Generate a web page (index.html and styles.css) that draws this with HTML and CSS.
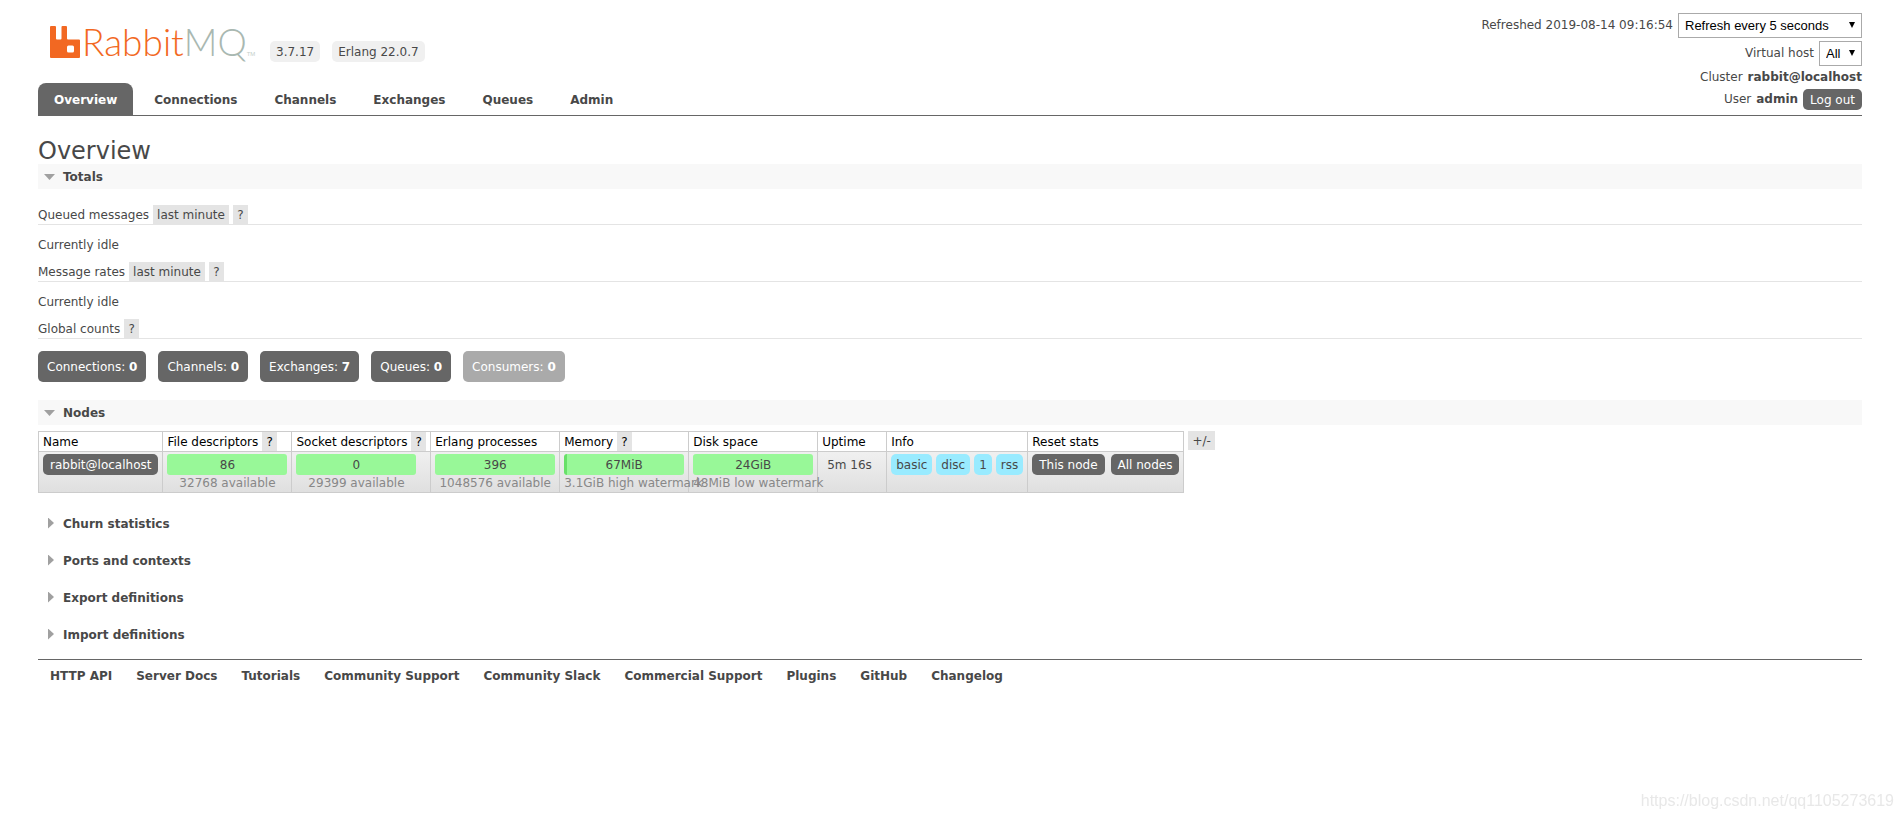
FILE: index.html
```html
<!DOCTYPE html>
<html lang="en">
<head>
<meta charset="utf-8">
<title>RabbitMQ Management</title>
<link rel="stylesheet" href="styles.css">
</head>
<body>
<header class="page-header">
  <div class="brand">
    <a class="logo" href="#">
      <svg class="logo-mark" viewBox="0 0 30 32" aria-hidden="true"><path fill="#f26822" fill-rule="evenodd" d="M1 0h4q1 0 1 1v11.500q0 1 1 1h3.500q1 0 1-1v-11.500q0-1 1-1h3.500q1 0 1 1v11.500q0 1 1 1h11q1 0 1 1v16.500q0 1-1 1h-28q-1 0-1-1v-30q0-1 1-1zM18.500 19.500q-1.500 0-1.500 1.500v4q0 1.500 1.500 1.500h4q1.500 0 1.500-1.500v-4q0-1.500-1.500-1.500z"/></svg>
      <span class="logo-name">Rabbit<span class="logo-mq">MQ</span></span>
      <span class="logo-tm">TM</span>
    </a>
    <ul class="versions">
      <li>3.7.17</li>
      <li>Erlang 22.0.7</li>
    </ul>
  </div>
  <div class="session">
    <div class="selects">
      <div class="session-row">
        <label for="refresh">Refreshed 2019-08-14 09:16:54</label>
        <span class="select refresh-select"><select id="refresh"><option>Refresh every 5 seconds</option></select><svg class="arrow" viewBox="0 0 6 6" aria-hidden="true"><path d="M0 0h6L3 6z"/></svg></span>
      </div>
      <div class="session-row">
        <label for="vhost">Virtual host</label>
        <span class="select"><select id="vhost"><option>All</option></select><svg class="arrow" viewBox="0 0 6 6" aria-hidden="true"><path d="M0 0h6L3 6z"/></svg></span>
      </div>
    </div>
    <div class="session-row info-row">Cluster <b>rabbit@localhost</b></div>
    <div class="session-row info-row">User <b>admin</b> <button class="pill" type="button">Log out</button></div>
  </div>
</header>
<nav class="tabs">
  <a class="tab selected" href="#">Overview</a>
  <a class="tab" href="#">Connections</a>
  <a class="tab" href="#">Channels</a>
  <a class="tab" href="#">Exchanges</a>
  <a class="tab" href="#">Queues</a>
  <a class="tab" href="#">Admin</a>
</nav>
<main>
  <h1>Overview</h1>
  <section>
    <h2 class="section-title open"><button type="button"><span class="marker"></span>Totals</button></h2>
    <div class="totals">
      <h3>Queued messages <button class="chip" type="button">last minute</button> <button class="chip help" type="button">?</button></h3>
      <p>Currently idle</p>
      <h3>Message rates <button class="chip" type="button">last minute</button> <button class="chip help" type="button">?</button></h3>
      <p>Currently idle</p>
      <h3>Global counts <button class="chip help" type="button">?</button></h3>
      <div class="counts">
        <a href="#">Connections: <b>0</b></a>
        <a href="#">Channels: <b>0</b></a>
        <a href="#">Exchanges: <b>7</b></a>
        <a href="#">Queues: <b>0</b></a>
        <span class="disabled">Consumers: <b>0</b></span>
      </div>
    </div>
  </section>
  <section>
    <h2 class="section-title open"><button type="button"><span class="marker"></span>Nodes</button></h2>
    <div class="nodes">
      <table>
        <thead>
          <tr>
            <th>Name</th>
            <th>File descriptors <button class="chip help" type="button">?</button></th>
            <th>Socket descriptors <button class="chip help" type="button">?</button></th>
            <th>Erlang processes</th>
            <th>Memory <button class="chip help" type="button">?</button></th>
            <th>Disk space</th>
            <th class="uptime">Uptime</th>
            <th>Info</th>
            <th>Reset stats</th>
          </tr>
        </thead>
        <tbody>
          <tr>
            <td><a class="pill" href="#">rabbit@localhost</a></td>
            <td><div class="status"><div class="bar">86</div><small>32768 available</small></div></td>
            <td><div class="status"><div class="bar">0</div><small>29399 available</small></div></td>
            <td><div class="status"><div class="bar">396</div><small>1048576 available</small></div></td>
            <td><div class="status"><div class="bar used">67MiB</div><small>3.1GiB high watermark</small></div></td>
            <td><div class="status"><div class="bar">24GiB</div><small>48MiB low watermark</small></div></td>
            <td class="uptime"><div class="text">5m 16s</div></td>
            <td><div class="group tags"><span>basic</span><span>disc</span><span>1</span><span>rss</span></div></td>
            <td><div class="group resets"><button class="pill" type="button">This node</button><button class="pill" type="button">All nodes</button></div></td>
          </tr>
        </tbody>
      </table>
      <button class="chip columns" type="button">+/-</button>
    </div>
  </section>
  <div class="closed-sections">
    <h2 class="section-title"><button type="button"><span class="marker"></span>Churn statistics</button></h2>
    <h2 class="section-title"><button type="button"><span class="marker"></span>Ports and contexts</button></h2>
    <h2 class="section-title"><button type="button"><span class="marker"></span>Export definitions</button></h2>
    <h2 class="section-title"><button type="button"><span class="marker"></span>Import definitions</button></h2>
  </div>
</main>
<footer>
  <a href="#">HTTP API</a>
  <a href="#">Server Docs</a>
  <a href="#">Tutorials</a>
  <a href="#">Community Support</a>
  <a href="#">Community Slack</a>
  <a href="#">Commercial Support</a>
  <a href="#">Plugins</a>
  <a href="#">GitHub</a>
  <a href="#">Changelog</a>
</footer>
<div class="watermark">https://blog.csdn.net/qq1105273619</div>
</body>
</html>
```

FILE: styles.css
```css
* { box-sizing: border-box; }

body {
  margin: 0;
  padding: 13px 41px 0 38px;
  background: #fff;
  color: #484848;
  font: 12px/17px Verdana, "DejaVu Sans", sans-serif;
}

a { color: inherit; text-decoration: none; }
button { font: inherit; color: inherit; border: 0; margin: 0; padding: 0; background: none; cursor: pointer; }
h1, h2, h3, p, ul { margin: 0; padding: 0; font-weight: normal; }

/* Header */
.page-header { display: flex; justify-content: space-between; align-items: flex-start; height: 70px; }
.brand { display: flex; gap: 17px; padding: 5px 0 0 12px; }
.logo { display: flex; align-items: flex-end; width: 203px; height: 40px; white-space: nowrap; }
.logo-mark { flex: none; width: 30px; height: 32px; margin-right: 2px; }
.logo-name { color: #f26822; font: 300 37px/32px Lato, "Liberation Sans", sans-serif; }
.logo-mq { color: #a9b8b1; }
.logo-tm { color: #c5cfca; font: 6px/8px "Liberation Sans", sans-serif; }
.versions { display: flex; gap: 12px; list-style: none; padding-top: 23px; }
.versions li { height: 21px; padding: 3px 6px 1px; border-radius: 5px; background: #f0f0f0; }

.session, .selects { display: flex; flex-direction: column; align-items: flex-end; }
.selects { gap: 3px; }
.session-row { display: flex; align-items: center; gap: 5px; }
.info-row { height: 22px; }
.select { position: relative; display: flex; }
.select select {
  appearance: none;
  height: 25px;
  padding: 0 20px 0 6px;
  border: 1px solid #aaa;
  border-radius: 0;
  background: #fff;
  color: #000;
  font: 13px "Liberation Sans", Arial, sans-serif;
}
.refresh-select select { width: 184px; }
.arrow { position: absolute; right: 7px; top: 9px; width: 6px; height: 6px; pointer-events: none; }
.pill { display: block; height: 21px; padding: 3px 7px 1px; border-radius: 5px; background: #666; color: #fff; }

/* Tabs */
.tabs { display: flex; gap: 5px; border-bottom: 1px solid #666; font-weight: bold; }
.tab { padding: 9px 16px 6px; border-radius: 8px 8px 0 0; }
.tab.selected { background: #666; color: #fff; }

h1 { padding-top: 22px; font-size: 24px; line-height: 26px; }

/* Collapsible sections */
.section-title { font-size: 12px; font-weight: bold; }
.section-title button { display: flex; align-items: center; width: 100%; height: 25px; padding-top: 1px; text-align: left; }
.section-title.open { background: #f8f8f8; }
.marker { width: 25px; height: 13px; flex: none; }
.marker::before { content: ""; display: block; width: 6px; height: 11px; margin-left: 10px; background: #a0a0a0; clip-path: polygon(0 0, 100% 50%, 0 100%); }
.open .marker { height: 6px; }
.open .marker::before { width: 11px; height: 6px; margin-left: 6px; clip-path: polygon(0 0, 100% 0, 50% 100%); }

.totals { padding: 16px 0 18px; }
.totals h3 { display: flex; align-items: flex-end; gap: 4px; height: 20px; border-bottom: 1px solid #e4e4e4; font-size: 12px; }
.totals p { padding: 12px 0 8px; }
.chip { height: 19px; padding: 2px 4px 0; background: #e4e4e4; }
.help { width: 15px; }

.counts { display: flex; gap: 12px; padding-top: 12px; }
.counts > * { padding: 8px 9px 6px; border-radius: 5px; background: #666; color: #fff; }
.counts .disabled { background: #aaa; }

/* Nodes table */
.nodes { display: flex; gap: 4px; padding-top: 6px; align-items: flex-start; }
table { border-collapse: collapse; }
th, td { border: 1px solid #ccc; padding: 0 4px; text-align: left; vertical-align: top; white-space: nowrap; }
th { height: 20px; color: #000; font-weight: normal; vertical-align: bottom; }
tbody tr { height: 41px; background: linear-gradient(#f0f0f0, #dfdfdf); }
td { padding-top: 2px; }
.status { width: 120px; text-align: center; }
.bar { height: 21px; padding: 3px 0 1px; border-radius: 3px; background: #98f898; }
.bar.used { background: linear-gradient(90deg, #68e068 3px, #98f898 3px); }
small { display: block; color: #888; font-size: 12px; line-height: 16px; }
.uptime { min-width: 69px; }
.text { padding: 3px 5px; }
.group { display: flex; gap: 4px; }
.tags span { height: 21px; padding: 3px 5px 1px; border-radius: 5px; background: #99ebff; }
.resets { gap: 6px; }

.closed-sections { display: flex; flex-direction: column; gap: 12px; padding: 18px 0 12px; }

footer { display: flex; flex-wrap: wrap; gap: 24px; padding: 8px 12px; border-top: 1px solid #666; font-weight: bold; }

.watermark {
  position: fixed;
  right: 9px;
  bottom: 8px;
  color: #e8e8e8;
  font: 16px/20px "Liberation Sans", Arial, sans-serif;
}
```
